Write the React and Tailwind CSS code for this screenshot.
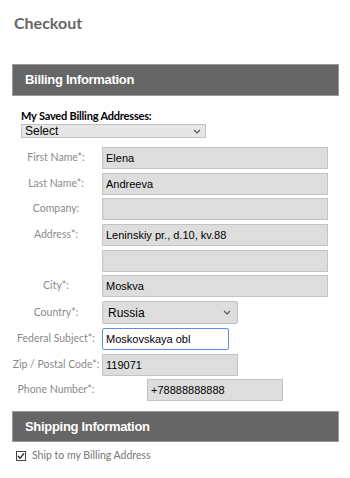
import React from "react";

const labelCls =
  "w-[88px] shrink-0 whitespace-nowrap flex justify-center text-[10.5px] text-[#8a8a8a] [font-family:Lato,sans-serif]";
const inputCls =
  "h-[22px] bg-[#dddddd] border border-[#c3c3c3] px-[3px] text-[11px] text-black flex items-center [font-family:'Liberation_Sans',Arial,sans-serif]";

function Row({ label, value, className = "", w = "w-[226px]", inputClass = "", extra = "" }) {
  return (
    <div className={`flex items-center ${className}`}>
      <div className={labelCls}>{label}</div>
      <div className={`ml-[2px] ${extra} ${w} ${inputCls} ${inputClass}`}>{value}</div>
    </div>
  );
}

function Chevron() {
  return (
    <svg width="8" height="5" viewBox="0 0 8 5" className="shrink-0">
      <path d="M1 1 L4 4 L7 1" fill="none" stroke="#555" strokeWidth="1.2" />
    </svg>
  );
}

export default function App() {
  return (
    <div className="w-[350px] h-[478px] bg-white relative overflow-hidden">
      <div className="pl-[12px] pt-[12px]">
        <div className="ml-[2px] text-[16px] font-bold text-[#666] leading-[22px] [font-family:Lato,sans-serif]">
          Checkout
        </div>
        <div className="mt-[30px] w-[327px] h-[32px] bg-[#666666] border border-[#9a9a9a] flex items-center pl-[12px] text-white font-bold text-[13px] tracking-[-0.3px] [font-family:'Liberation_Sans',Arial,sans-serif]">
          Billing Information
        </div>
        <div className="ml-[9px] mt-[14px] text-[11px] font-bold text-black leading-[12px] tracking-[-0.2px] [font-family:Lato,sans-serif]">
          My Saved Billing Addresses:
        </div>
        <div className="ml-[9px] mt-[2px] w-[185px] h-[14px] bg-[#e6e6e6] border border-[#c3c3c3] flex items-center justify-between pl-[3px] pr-[4px] text-[12px] text-black leading-none [font-family:'Liberation_Sans',Arial,sans-serif]">
          <span>Select</span>
          <Chevron />
        </div>

        <div className="flex flex-col">
          <Row className="mt-[9px]" label="First Name*:" value="Elena" />
          <Row className="mt-[4px]" label="Last Name*:" value="Andreeva" />
          <Row className="mt-[3px]" label="Company:" value="" />
          <Row className="mt-[4px]" label="Address*:" value="Leninskiy pr., d.10, kv.88" />
          <Row className="mt-[4px]" label="" value="" />
          <Row className="mt-[3px]" label="City*:" value="Moskva" />
          <div className="flex items-center mt-[4px]">
            <div className={labelCls}>Country*:</div>
            <div className="ml-[2px] w-[136px] h-[23px] bg-[#dddddd] border border-[#c3c3c3] rounded-[2px] flex items-center justify-between pl-[5px] pr-[6px] text-[12px] text-black [font-family:'Liberation_Sans',Arial,sans-serif]">
              <span>Russia</span>
              <Chevron />
            </div>
          </div>
          <Row
            className="mt-[4px]"
            label="Federal Subject*:"
            value="Moskovskaya obl"
            w="w-[127px]"
            inputClass="!bg-white !border-[#5b8fe3] rounded-[2px]"
          />
          <Row className="mt-[4px]" label="Zip / Postal Code*:" value="119071" w="w-[136px]" />
          <Row
            className="mt-[3px]"
            label="Phone Number*:"
            value="+78888888888"
            w="w-[136px]"
            extra="!ml-[47px]"
          />
        </div>

        <div className="mt-[10px] w-[327px] h-[31px] bg-[#666666] border border-[#9a9a9a] flex items-center pl-[12px] text-white font-bold text-[13px] tracking-[-0.3px] [font-family:'Liberation_Sans',Arial,sans-serif]">
          Shipping Information
        </div>
        <div className="mt-[6px] ml-[4px] flex items-center gap-[6px]">
          <svg width="10" height="10" viewBox="0 0 10 10">
            <rect x="0.5" y="0.5" width="9" height="9" fill="white" stroke="#444" />
            <path d="M2 5 L4 7.3 L8 2.5" fill="none" stroke="#222" strokeWidth="1.3" />
          </svg>
          <span className="text-[10.5px] text-[#777] [font-family:Lato,sans-serif]">
            Ship to my Billing Address
          </span>
        </div>
      </div>
    </div>
  );
}
